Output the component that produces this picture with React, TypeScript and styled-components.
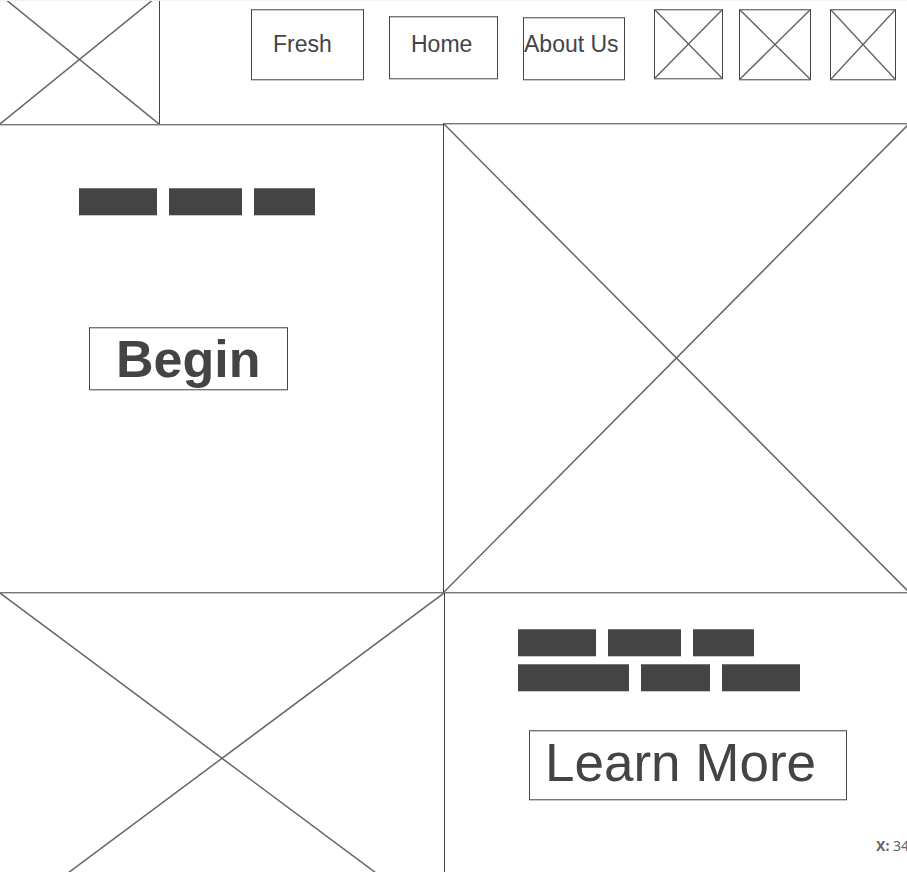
import React from "react";
import styled, { createGlobalStyle } from "styled-components";

const ink = "#444444";
const edge = "#777777";
const haze = "#c8c8c8";

const GlobalStyle = createGlobalStyle`
  *, *::before, *::after { box-sizing: border-box; }
  body {
    margin: 0;
    background: #ffffff;
    color: ${ink};
    font-family: "Liberation Sans", Arial, sans-serif;
    overflow-x: hidden;
  }
`;

const Page = styled.div`
  display: flex;
  flex-direction: column;
  min-height: 100vh;
`;

const Header = styled.header`
  display: flex;
  justify-content: space-between;
  align-items: flex-start;
  height: 124px;
  padding-right: 11px;
  border-top: 1px solid #f4f4f4;
`;

const Logo = styled.a`
  display: block;
  flex: none;
  width: 160px;
  height: 123px;
  border-right: 1px solid ${ink};
`;

const HeaderItems = styled.div`
  display: flex;
  align-items: flex-start;
  padding-top: 8px;
`;

const Nav = styled.nav`
  display: flex;
  align-items: flex-start;
  gap: 25px;
  margin-right: 29px;
`;

const outline = `
  border: 1px solid ${ink};
  border-top-color: ${edge};
  border-bottom-color: ${edge};
  box-shadow: inset 0 1px 0 ${haze}, 0 1px 0 ${haze};
`;

const NavLink = styled.a<{ $width: number; $height: number; $drop: number; $inset: number }>`
  ${outline}
  display: block;
  width: ${(p) => p.$width}px;
  height: ${(p) => p.$height}px;
  margin-top: ${(p) => p.$drop}px;
  padding-top: ${(p) => 21 - p.$drop}px;
  padding-left: ${(p) => p.$inset}px;
  color: ${ink};
  font-size: 23px;
  line-height: 26px;
  text-decoration: none;
  white-space: nowrap;
`;

const IconButton = styled.button<{ $width: number; $height: number }>`
  ${outline}
  display: block;
  width: ${(p) => p.$width}px;
  height: ${(p) => p.$height}px;
  padding: 0;
  background: none;
  cursor: pointer;
`;

const Actions = styled.div`
  display: flex;
  align-items: flex-start;
  gap: 16px;

  ${IconButton}:last-child {
    margin-left: 3px;
  }
`;

const Art = styled.svg`
  display: block;
  width: 100%;
  height: 100%;
  overflow: hidden;
  stroke: #666666;
  stroke-width: 1.5;
`;

const Main = styled.main`
  display: flex;
  flex: 1;
  flex-direction: column;
`;

const Hero = styled.section`
  display: grid;
  grid-template-columns: 443fr 464fr;
  height: 468px;
`;

const Feature = styled.section`
  display: grid;
  flex: 1;
  grid-template-columns: 444fr 463fr;
  min-height: 280px;
  border-top: 1px solid ${edge};
  box-shadow: inset 0 1px 0 ${haze};
`;

const HeroCopy = styled.div`
  display: flex;
  flex-direction: column;
  align-items: flex-start;
  padding: 63px 24px 0 79px;
  border-top: 1px solid ${edge};
  box-shadow: inset 0 1px 0 ${haze};
`;

const HeroPicture = styled.div`
  height: 469px;
  margin-top: -1px;
  border-top: 1px solid ${edge};
  border-left: 1px solid ${ink};
  box-shadow: inset 0 1px 0 ${haze};
`;

const FeaturePicture = styled.div`
  min-width: 0;
`;

const FeatureCopy = styled.div`
  display: flex;
  flex-direction: column;
  align-items: flex-start;
  min-width: 0;
  padding: 36px 0 16px 73px;
  border-left: 1px solid ${ink};
  overflow: hidden;
`;

const Bars = styled.div`
  display: flex;
  flex-direction: column;
  gap: 7px;
`;

const BarRow = styled.div`
  display: flex;
  gap: 12px;
`;

const Bar = styled.span<{ $width: number }>`
  width: ${(p) => p.$width}px;
  height: 28px;
  background: ${ink};
  border-top: 1px solid ${edge};
  border-bottom: 1px solid ${haze};
`;

const CallButton = styled.button`
  ${outline}
  display: block;
  background: none;
  color: ${ink};
  font-family: inherit;
  line-height: 60px;
  text-align: left;
  white-space: nowrap;
  cursor: pointer;
`;

const BeginButton = styled(CallButton)`
  width: 199px;
  height: 63px;
  margin: 111px 0 0 10px;
  padding: 0 0 0 26px;
  font-size: 52px;
  font-weight: 700;
`;

const LearnButton = styled(CallButton)`
  width: 318px;
  height: 70px;
  margin: 38px 0 0 11px;
  padding: 0 0 4px 15px;
  font-size: 53px;
`;

const Position = styled.p`
  align-self: flex-end;
  margin: auto -2px 0 0;
  color: #666666;
  font-family: "Noto Sans", "Open Sans", sans-serif;
  font-size: 14px;
  line-height: 20px;
  white-space: nowrap;
`;

function Cross({
  top = "0%",
  right = "100%",
  bottom = "100%",
}: {
  top?: string;
  right?: string;
  bottom?: string;
}) {
  return (
    <Art aria-hidden="true">
      <line x1="0%" y1={top} x2={right} y2={bottom} />
      <line x1={right} y1={top} x2="0%" y2={bottom} />
    </Art>
  );
}

function BarLine({ widths }: { widths: number[] }) {
  return (
    <BarRow>
      {widths.map((width, i) => (
        <Bar key={i} $width={width} />
      ))}
    </BarRow>
  );
}

const links = [
  { label: "Fresh", width: 113, height: 71, drop: 0, inset: 21 },
  { label: "Home", width: 109, height: 63, drop: 7, inset: 21 },
  { label: "About Us", width: 102, height: 63, drop: 8, inset: 0 },
];

const actions = [
  { label: "Search", width: 69, height: 70 },
  { label: "Account", width: 72, height: 71 },
  { label: "Cart", width: 66, height: 71 },
];

export default function App() {
  return (
    <>
      <GlobalStyle />
      <Page>
        <Header>
          <Logo href="#" aria-label="Logo">
            <Cross top="-5%" />
          </Logo>
          <HeaderItems>
            <Nav>
              {links.map((l) => (
                <NavLink key={l.label} href="#" $width={l.width} $height={l.height} $drop={l.drop} $inset={l.inset}>
                  {l.label}
                </NavLink>
              ))}
            </Nav>
            <Actions>
              {actions.map((a) => (
                <IconButton key={a.label} type="button" aria-label={a.label} $width={a.width} $height={a.height}>
                  <Cross />
                </IconButton>
              ))}
            </Actions>
          </HeaderItems>
        </Header>
        <Main>
          <Hero>
            <HeroCopy>
              <BarLine widths={[78, 73, 61]} />
              <BeginButton type="button">Begin</BeginButton>
            </HeroCopy>
            <HeroPicture>
              <Cross right="100.4%" />
            </HeroPicture>
          </Hero>
          <Feature>
            <FeaturePicture>
              <Cross bottom="118.5%" />
            </FeaturePicture>
            <FeatureCopy>
              <Bars>
                <BarLine widths={[78, 73, 61]} />
                <BarLine widths={[111, 69, 78]} />
              </Bars>
              <LearnButton type="button">Learn More</LearnButton>
              <Position>
                <b>X:</b> 34
              </Position>
            </FeatureCopy>
          </Feature>
        </Main>
      </Page>
    </>
  );
}
